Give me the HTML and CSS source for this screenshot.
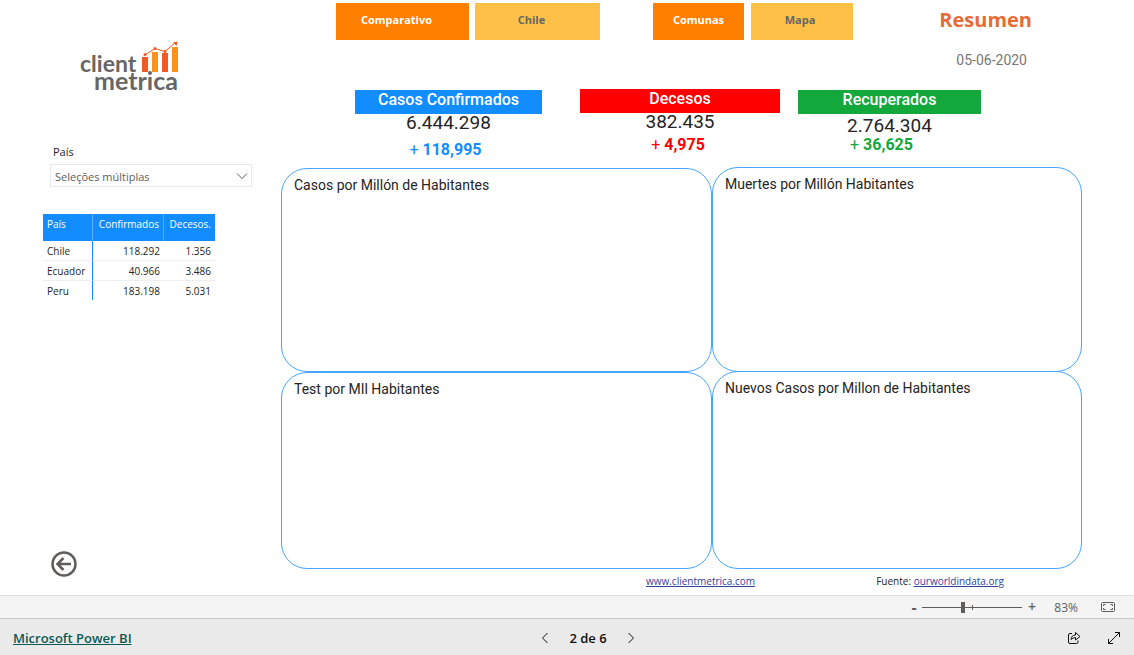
FILE: index.html
```
<!DOCTYPE html>
<html lang="es">
<head>
<meta charset="utf-8">
<meta name="viewport" content="width=device-width, initial-scale=1">
<title>Resumen</title>
<link rel="stylesheet" href="styles.css">
</head>
<body>
<main class="report">
  <aside class="sidebar">
    <svg class="logo" viewBox="0 0 104 56" role="img" aria-label="client metrica">
      <g class="logo-text">
        <text x="0" y="32">client</text>
        <text class="logo-wide" x="14" y="50">metrica</text>
      </g>
      <path class="bar-red" d="M62 17h6v15h-6zM82 13h6v19h-6z"/>
      <path class="bar-amber" d="M72 12h6v20h-6zM92 7h6v25h-6z"/>
      <path class="trend" d="M65 15L75 8.500L85 11.500L95 3"/>
      <g class="bar-red"><circle cx="65" cy="14.500" r="1.500"/><circle cx="75" cy="8.500" r="1.500"/><circle cx="85" cy="11.500" r="1.500"/><path d="M93 2.500L97.500 1.500L96.500 6z"/></g>
    </svg>
    <div class="filter">
      <label for="pais">País</label>
      <div class="select-wrap">
        <select id="pais"><option>Seleções múltiplas</option></select>
        <svg class="chevron" viewBox="0 0 12 8"><path d="M1 1.500L6 6.500L11 1.500"/></svg>
      </div>
    </div>
    <table class="countries">
      <thead><tr><th scope="col">País</th><th scope="col">Confirmados</th><th scope="col">Decesos.</th></tr></thead>
      <tbody>
        <tr><td>Chile</td><td>118.292</td><td>1.356</td></tr>
        <tr><td>Ecuador</td><td>40.966</td><td>3.486</td></tr>
        <tr><td>Peru</td><td>183.198</td><td>5.031</td></tr>
      </tbody>
    </table>
    <button class="back" type="button" aria-label="Volver">
      <svg viewBox="0 0 26 26"><circle cx="13" cy="13" r="11.500"/><path d="M20 13H7M12.500 7L6.500 13L12.500 19"/></svg>
    </button>
  </aside>
  <div class="content">
    <header class="top">
      <nav class="tabs">
        <button type="button" class="tab strong">Comparativo</button>
        <button type="button" class="tab">Chile</button>
        <button type="button" class="tab strong">Comunas</button>
        <button type="button" class="tab">Mapa</button>
      </nav>
      <div class="heading">
        <h1>Resumen</h1>
        <time datetime="2020-06-05">05-06-2020</time>
      </div>
    </header>
    <section class="kpis">
      <article class="kpi confirmed"><h2>Casos Confirmados</h2><p class="total">6.444.298</p><p class="delta"><span>+</span> 118,995</p></article>
      <article class="kpi deaths"><h2>Decesos</h2><p class="total">382.435</p><p class="delta"><span>+</span> 4,975</p></article>
      <article class="kpi recovered"><h2>Recuperados</h2><p class="total">2.764.304</p><p class="delta"><span>+</span> 36,625</p></article>
    </section>
    <section class="charts">
      <div class="column left">
        <article class="panel"><h3>Casos por Millón de Habitantes</h3></article>
        <article class="panel"><h3>Test por MIl Habitantes</h3></article>
      </div>
      <div class="column right">
        <article class="panel"><h3>Muertes por Millón Habitantes</h3></article>
        <article class="panel"><h3>Nuevos Casos por Millon de Habitantes</h3></article>
      </div>
    </section>
    <div class="sources">
      <a href="#site">www.clientmetrica.com</a>
      <span>Fuente: <a href="#data">ourworldindata.org</a></span>
    </div>
  </div>
</main>
<div class="zoombar">
  <button type="button" class="step" aria-label="Reducir">-</button>
  <input class="zoom" type="range" min="0" max="100" value="41" aria-label="Zoom">
  <button type="button" class="step" aria-label="Ampliar">+</button>
  <output class="percent">83%</output>
  <button type="button" class="fit" aria-label="Ajustar a la página">
    <svg viewBox="0 0 14 10"><rect x="0.500" y="0.500" width="13" height="9" rx="1"/><path d="M4.500 2.500h-2v1.500M2.500 6v1.500h2M9.500 2.500h2v1.500M11.500 6v1.500h-2"/></svg>
  </button>
</div>
<footer class="footer">
  <a class="brand" href="#powerbi">Microsoft Power BI</a>
  <nav class="pager">
    <button type="button" aria-label="Anterior"><svg viewBox="0 0 8 12"><path d="M6.500 1L1.500 6L6.500 11"/></svg></button>
    <span>2 de 6</span>
    <button type="button" aria-label="Siguiente"><svg viewBox="0 0 8 12"><path d="M1.500 1L6.500 6L1.500 11"/></svg></button>
  </nav>
  <div class="actions">
    <button type="button" aria-label="Compartir"><svg viewBox="0 0 14 14"><path d="M5 2.500H3Q1.500 2.500 1.500 4V11Q1.500 12.500 3 12.500H9.500Q11 12.500 11 11V9.500M4 8.500Q4.500 4 8.500 4V1.500L13 5.500L8.500 9V6.500Q6 6.500 4 8.500Z"/></svg></button>
    <button type="button" aria-label="Pantalla completa"><svg viewBox="0 0 14 14"><path d="M1.500 12.500L12.500 1.500M8 1.500H12.500V6M1.500 8V12.500H6"/></svg></button>
  </div>
</footer>
</body>
</html>
```
FILE: styles.css
```
* { box-sizing: border-box; }
body {
  margin: 0;
  min-height: 100vh;
  display: flex;
  flex-direction: column;
  background: #fff;
  color: #252423;
  font-family: "Open Sans", "Noto Sans", sans-serif;
  font-size: 11px;
}
button { padding: 0; border: 0; background: none; font: inherit; color: inherit; cursor: pointer; }
h1, h2, h3, p { margin: 0; }
svg { display: block; fill: none; stroke: currentColor; }

.report { flex: 1; display: flex; padding-right: 52px; }
.sidebar { flex: 0 0 281px; display: flex; flex-direction: column; padding: 40px 29px 18px 43px; }
.logo { width: 104px; height: 56px; margin-left: 37px; stroke: none; }
.logo-text { fill: #666; font: 700 23px Lato, sans-serif; }
.logo-wide { font-size: 25px; }
.bar-red { fill: #f15a24; }
.bar-amber { fill: #f7931e; }
.trend { stroke: #f15a24; stroke-width: 1; }

.filter { margin: 48px 0 0 7px; }
.filter label { display: block; padding-left: 3px; line-height: 16px; margin-bottom: 4px; }
.select-wrap { display: grid; align-items: center; }
.select-wrap > * { grid-area: 1 / 1; }
select {
  appearance: none;
  height: 23px;
  padding: 1px 4px 0;
  border: 1px solid #eaeaea;
  border-radius: 0;
  background: #fff;
  color: #605e5c;
  font: inherit;
}
.chevron { width: 12px; height: 8px; justify-self: end; margin-right: 4px; color: #605e5c; pointer-events: none; }

.countries { align-self: flex-start; width: 172px; margin-top: 27px; border-collapse: separate; border-spacing: 0; table-layout: fixed; font-size: 10px; line-height: 14px; }
.countries th { height: 27px; padding: 3px 4px; vertical-align: top; text-align: right; background: #118dff; color: #fff; font-weight: 400; }
.countries th { border-right: 1px solid #58aeff; }
.countries th:last-child { border-right: 0; }
.countries th:first-child, .countries td:first-child { width: 50px; text-align: left; }
.countries th:nth-child(2) { width: 71px; }
.countries td { padding: 3px 4px 2px; text-align: right; border-bottom: 1px solid #eee; }
.countries td:first-child { border-right: 1px solid #118dff; }
.countries tr:last-child td { border-bottom: 0; }
.back { width: 26px; height: 26px; margin: auto 0 0 8px; color: #605e5c; }
.back svg { stroke-width: 2.500; }

.content { flex: 1; min-width: 0; display: flex; flex-direction: column; }
.top { display: flex; padding: 3px 50px 0 55px; height: 89px; justify-content: space-between; }
.tabs { flex: 0 1 517px; display: grid; grid-template-columns: 133fr 6fr 125fr 53fr 91fr 7fr 102fr; align-items: start; }
.tab { height: 37px; padding: 0 12px 4px 0; background: #ffc048; color: #666; font-weight: 700; }
.tab:nth-child(2) { grid-column: 3; }
.tab:nth-child(3) { grid-column: 5; padding-right: 0; }
.tab:nth-child(4) { grid-column: 7; padding-right: 4px; }
.tab.strong { background: #ff7f00; color: #fff; }
.heading { text-align: center; }
.heading h1 { color: #e66c37; font-size: 20px; line-height: 34px; }
.heading time { display: block; margin: 14px 0 0 12px; color: #777; font: 14px/18px Roboto, sans-serif; }

.kpis { display: grid; grid-template-columns: 74fr 187fr 38fr 200fr 18fr 183fr 101fr; height: 78px; font-family: Roboto, sans-serif; text-align: center; }
.kpi { margin-top: 1px; }
.kpi h2 { height: 24px; color: #fff; font-size: 16px; font-weight: 500; line-height: 20px; }
.total { font-size: 19px; line-height: 18px; color: #252423; }
.delta { margin-top: 9px; padding-right: 6px; font-size: 16px; line-height: 18px; font-weight: 700; }
.delta span { font-weight: 400; }
.confirmed { grid-column: 2; color: #118dff; }
.confirmed h2 { background: #118dff; }
.deaths { grid-column: 4; margin-top: 0; color: #f00; }
.deaths h2 { background: #f00; }
.recovered { grid-column: 6; color: #12a83b; }
.recovered h2 { background: #12a83b; }
.deaths .delta { margin-top: 5px; padding-right: 4px; }
.recovered .total { padding-top: 3px; }
.recovered .delta { margin-top: 1px; padding-right: 16px; }

.charts { flex: 1; display: grid; grid-template-columns: 431fr 370fr; }
.column { display: flex; flex-direction: column; }
.left { padding-top: 1px; }
.panel { flex: 197 1 197px; padding: 7px 12px; border: 1px solid #45a5ff; border-radius: 26px; }
.panel:first-child { flex: 203 1 203px; }
.right .panel + .panel { margin-top: -1px; }
.panel h3 { font: 400 14px/18px Roboto, sans-serif; }

.sources { display: flex; justify-content: space-between; height: 26px; padding: 4px 78px 0 365px; font-size: 10px; line-height: 16px; }
.sources a { color: #33429a; }

.zoombar { height: 23px; display: flex; align-items: center; justify-content: flex-end; padding-right: 19px; border-top: 1px solid #ddd; background: #f4f4f4; color: #605e5c; font-size: 12px; }
.step { width: 16px; font-size: 14px; font-weight: 600; line-height: 20px; }
.step:first-child { width: 12px; font-size: 16px; font-weight: 700; }
.zoom {
  appearance: none;
  width: 100px;
  height: 12px;
  margin: 0 2px;
  background:
    linear-gradient(#605e5c, #605e5c) 50px 50% / 1px 5px no-repeat,
    linear-gradient(#605e5c, #605e5c) 0 50% / 100% 1px no-repeat;
}
.zoom::-webkit-slider-thumb { appearance: none; width: 4px; height: 11px; background: #605e5c; }
.zoom::-moz-range-thumb { width: 4px; height: 11px; border: 0; border-radius: 0; background: #605e5c; }
.percent { width: 38px; text-align: right; }
.fit { width: 14px; margin-left: 23px; }

.footer { height: 37px; display: grid; grid-template-columns: 1fr auto 1fr; align-items: center; padding: 2px 13px 0; border-top: 1px solid #c8c8c8; background: #eaeaea; color: #111; font-size: 13px; font-weight: 600; }
.brand { justify-self: start; color: #0b5a56; }
.pager { display: flex; align-items: center; gap: 20px; margin-left: 42px; }
.pager svg { width: 8px; height: 12px; }
.actions { display: flex; gap: 26px; justify-self: end; }
.actions svg { width: 14px; height: 14px; }
```
